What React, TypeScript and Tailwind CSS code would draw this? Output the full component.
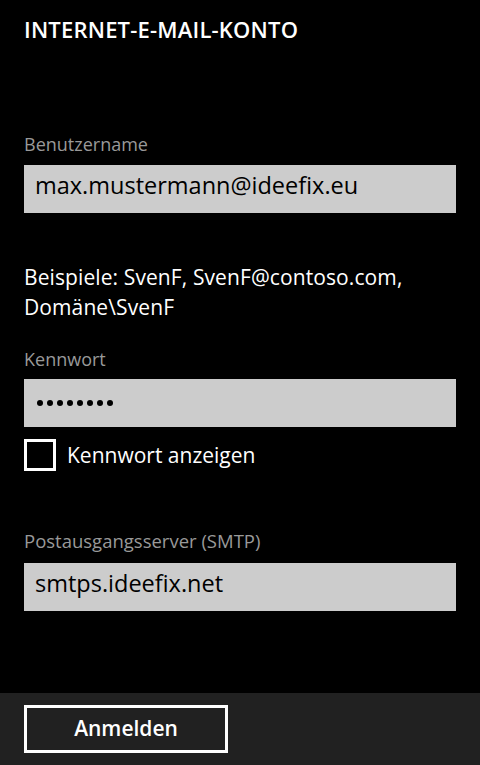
export default function App() {
  const font = { fontFamily: '"Open Sans", "Noto Sans", sans-serif' }

  return (
    <div className="w-[480px] h-[765px] bg-black text-white flex flex-col overflow-hidden" style={font}>
      <div className="flex-1 px-6">
        <h1 className="pt-[14px] text-[22px] leading-[30px] font-semibold tracking-[0.2px]">INTERNET-E-MAIL-KONTO</h1>

        {/* Benutzername */}
        <label className="block mt-[88px] text-[18px] leading-[24px] text-[#999999]">Benutzername</label>
        <div className="mt-[9px] h-12 bg-[#cccccc] text-black text-[23.5px] flex items-center px-[11px] pb-[6px]">
          max.mustermann@ideefix.eu
        </div>

        <p className="mt-[49px] text-[21px] leading-[30px] tracking-[0.1px]">
          Beispiele: SvenF, SvenF@contoso.com,
          <br />
          Domäne\SvenF
        </p>

        {/* Kennwort */}
        <label className="block mt-[25px] text-[18px] leading-[24px] text-[#999999]">Kennwort</label>
        <div className="mt-[8px] h-12 bg-[#cccccc] flex items-center px-[13px] gap-[4px]">
          {Array.from({ length: 8 }).map((_, i) => (
            <span key={i} className="w-[6px] h-[6px] rounded-full bg-black" />
          ))}
        </div>

        <div className="mt-3 flex items-center gap-[11px]">
          <span className="w-8 h-8 border-[3px] border-white" />
          <span className="text-[21px] leading-[32px]">Kennwort anzeigen</span>
        </div>

        {/* Postausgangsserver */}
        <label className="block mt-[58px] text-[18.5px] leading-[24px] text-[#999999]">Postausgangsserver (SMTP)</label>
        <div className="mt-[10px] h-12 bg-[#cccccc] text-black text-[23.5px] flex items-center px-[11px] pb-[6px]">
          smtps.ideefix.net
        </div>
      </div>

      <div className="h-[72px] bg-[#212121] px-6 pt-3">
        <button className="w-[204px] h-12 border-[3px] border-white text-[21px] font-semibold text-white">
          Anmelden
        </button>
      </div>
    </div>
  )
}
